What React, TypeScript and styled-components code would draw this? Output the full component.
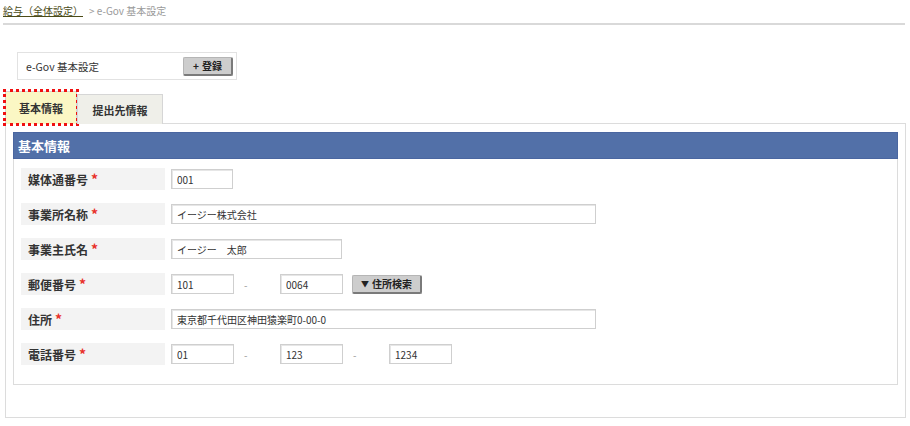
import React from "react";
import styled, { createGlobalStyle } from "styled-components";

const Global = createGlobalStyle`
  html, body { margin: 0; padding: 0; background: #fff; }
  body {
    font-family: "Noto Sans CJK JP", "Noto Sans", "Liberation Sans", sans-serif;
    color: #333;
  }
  * { box-sizing: border-box; }
`;

const Page = styled.div`
  width: 910px;
  height: 426px;
  overflow: hidden;
`;

const Breadcrumb = styled.div`
  margin: 0 5px 0 3px;
  padding: 4px 0 5px 0;
  border-bottom: 2px solid #d9d9d9;
  font-size: 10px;
  line-height: 14px;
  color: #9a9a9a;
  display: flex;
  gap: 6px;
`;

const CrumbLink = styled.a`
  color: #4b4b17;
  text-decoration: underline;
`;

const Content = styled.div`
  margin: 0 4px 0 5px;
  padding-top: 27px;
`;

const HeaderBox = styled.div`
  margin-left: 12px;
  width: 220px;
  height: 28px;
  border: 1px solid #e2e2e2;
  display: flex;
  align-items: center;
  justify-content: space-between;
  padding: 0 3px 0 8px;
  font-size: 10.5px;
`;

const GrayButton = styled.button<{ $w: number }>`
  width: ${(p) => p.$w}px;
  height: 19px;
  padding: 0;
  background: #cdcdcd;
  border: 1px solid #b5b5b5;
  border-right: 2px solid #7a7a7a;
  border-bottom: 2px solid #7a7a7a;
  border-radius: 2px;
  font-family: inherit;
  font-size: 10px;
  font-weight: bold;
  color: #222;
  display: flex;
  align-items: center;
  justify-content: center;
  gap: 3px;
  line-height: 1;
`;

const Tabs = styled.div`
  margin-top: 9px;
  display: flex;
  align-items: flex-end;
  height: 34px;
  position: relative;
  z-index: 1;
`;

const Tab = styled.div<{ $active?: boolean }>`
  height: ${(p) => (p.$active ? 33 : 30)}px;
  width: ${(p) => (p.$active ? 72 : 86)}px;
  margin-bottom: -1px;
  display: flex;
  align-items: center;
  justify-content: center;
  font-size: 11px;
  font-weight: bold;
  color: #333;
  background: ${(p) => (p.$active ? "#fbf7c4" : "#efefe9")};
  border: 1px solid #d6d6d6;
  border-bottom: none;
  ${(p) => (p.$active ? "outline: 3px dotted #f01010; outline-offset: -1px;" : "")}
`;

const Panel = styled.div`
  border: 1px solid #dcdcdc;
  height: 295px;
  padding: 8px 7px 0 7px;
`;

const Section = styled.div`
  border: 1px solid #dcdcdc;
  border-top: none;
  padding-bottom: 19px;
`;

const SectionHead = styled.div`
  background: #5270a8;
  border: 1px solid #4a66a0;
  margin: 0 -1px;
  height: 27px;
  color: #fff;
  font-size: 13px;
  font-weight: bold;
  display: flex;
  align-items: center;
  padding-left: 4px;
`;

const Rows = styled.div`
  padding: 9px 7px 0 7px;
  display: flex;
  flex-direction: column;
  gap: 13px;
`;

const Row = styled.div`
  display: flex;
  align-items: center;
  height: 22px;
`;

const Label = styled.div`
  width: 144px;
  height: 22px;
  background: #f3f3f3;
  display: flex;
  align-items: center;
  padding-left: 7px;
  font-size: 12px;
  font-weight: bold;
  color: #333;
  margin-right: 6px;
`;

const Req = styled.span`
  color: #e8302a;
  font-size: 14px;
  margin-left: 3px;
  font-weight: bold;
`;

const Input = styled.input<{ $w: number }>`
  width: ${(p) => p.$w}px;
  height: 20px;
  border: 1px solid #cfcfcf;
  box-shadow: inset 1px 1px 0 #e6e6e6;
  padding: 0 0 0 5px;
  font-family: inherit;
  font-size: 10px;
  color: #333;
  background: #fff;
  outline: none;
`;

const Dash = styled.span`
  width: 46px;
  padding-left: 10px;
  font-size: 10px;
  color: #999;
`;

const Spacer = styled.span`
  width: 9px;
`;

const Tri = styled.span`
  font-size: 8px;
`;

const fields = [
  { label: "媒体通番号", inputs: [{ v: "001", w: 62 }] },
  { label: "事業所名称", inputs: [{ v: "イージー株式会社", w: 425 }] },
  { label: "事業主氏名", inputs: [{ v: "イージー　太郎", w: 171 }] },
];

export default function App() {
  return (
    <Page>
      <Global />
      <Breadcrumb>
        <CrumbLink>給与（全体設定）</CrumbLink>
        <span>&gt; e-Gov 基本設定</span>
      </Breadcrumb>
      <Content>
        <HeaderBox>
          <span>e-Gov 基本設定</span>
          <GrayButton $w={50}>
            <span>+</span>
            <span>登録</span>
          </GrayButton>
        </HeaderBox>
        <Tabs>
          <Tab $active>基本情報</Tab>
          <Tab>提出先情報</Tab>
        </Tabs>
        <Panel>
          <Section>
            <SectionHead>基本情報</SectionHead>
            <Rows>
              {fields.map((f) => (
                <Row key={f.label}>
                  <Label>
                    {f.label}
                    <Req>*</Req>
                  </Label>
                  {f.inputs.map((i) => (
                    <Input key={i.v} $w={i.w} defaultValue={i.v} />
                  ))}
                </Row>
              ))}
              <Row>
                <Label>
                  郵便番号<Req>*</Req>
                </Label>
                <Input $w={63} defaultValue="101" />
                <Dash>-</Dash>
                <Input $w={63} defaultValue="0064" />
                <Spacer />
                <GrayButton $w={70}>
                  <Tri>▼</Tri>
                  <span>住所検索</span>
                </GrayButton>
              </Row>
              <Row>
                <Label>
                  住所<Req>*</Req>
                </Label>
                <Input $w={425} defaultValue="東京都千代田区神田猿楽町0-00-0" />
              </Row>
              <Row>
                <Label>
                  電話番号<Req>*</Req>
                </Label>
                <Input $w={63} defaultValue="01" />
                <Dash>-</Dash>
                <Input $w={63} defaultValue="123" />
                <Dash>-</Dash>
                <Input $w={63} defaultValue="1234" />
              </Row>
            </Rows>
          </Section>
        </Panel>
      </Content>
    </Page>
  );
}
